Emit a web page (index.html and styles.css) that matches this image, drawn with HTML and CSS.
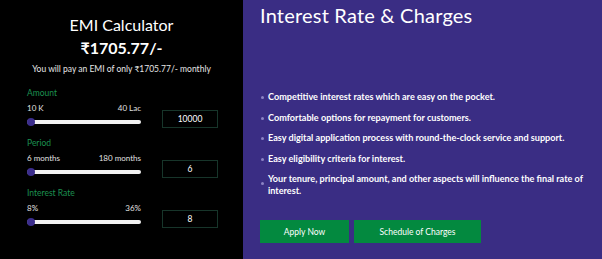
FILE: index.html
```html
<!DOCTYPE html>
<html lang="en">
<head>
    <meta charset="UTF-8">
    <meta name="viewport" content="width=device-width, initial-scale=1.0">
    <title>EMI Calculator</title>
    <link rel="stylesheet" href="styles.css">
</head>
<body>
    <div class="page">
        <section class="calculator">
            <h2 class="calc-title">EMI Calculator</h2>
            <div class="emi-value">₹1705.77/-</div>
            <p class="emi-note">You will pay an EMI of only ₹1705.77/- monthly</p>

            <div class="field">
                <label class="field-label" for="amount">Amount</label>
                <div class="field-row">
                    <div class="slider-block">
                        <div class="range-labels"><span>10 K</span><span>40 Lac</span></div>
                        <input type="range" class="slider" min="10000" max="4000000" value="10000">
                    </div>
                    <input type="text" class="value-box" id="amount" value="10000">
                </div>
            </div>

            <div class="field">
                <label class="field-label" for="period">Period</label>
                <div class="field-row">
                    <div class="slider-block">
                        <div class="range-labels"><span>6 months</span><span>180 months</span></div>
                        <input type="range" class="slider" min="6" max="180" value="6">
                    </div>
                    <input type="text" class="value-box" id="period" value="6">
                </div>
            </div>

            <div class="field">
                <label class="field-label" for="rate">Interest Rate</label>
                <div class="field-row">
                    <div class="slider-block">
                        <div class="range-labels"><span>8%</span><span>36%</span></div>
                        <input type="range" class="slider" min="8" max="36" value="8">
                    </div>
                    <input type="text" class="value-box" id="rate" value="8">
                </div>
            </div>
        </section>

        <section class="charges">
            <h1>Interest Rate &amp; Charges</h1>
            <ul class="charges-list">
                <li>Competitive interest rates which are easy on the pocket.</li>
                <li>Comfortable options for repayment for customers.</li>
                <li>Easy digital application process with round-the-clock service and support.</li>
                <li>Easy eligibility criteria for interest.</li>
                <li>Your tenure, principal amount, and other aspects will influence the final rate of interest.</li>
            </ul>
            <div class="actions">
                <a href="#" class="btn btn-apply">Apply Now</a>
                <a href="#" class="btn btn-schedule">Schedule of Charges</a>
            </div>
        </section>
    </div>
</body>
</html>
```

FILE: styles.css
```css
body {
    margin: 0;
    font-family: 'Lato', 'Noto Sans', sans-serif;
    color: #fff;
    background: #000;
}

.page {
    display: flex;
    height: 259px;
    overflow: hidden;
}

/* left: calculator */
.calculator {
    width: 243px;
    flex-shrink: 0;
    background: #000;
    padding-top: 15px;
    box-sizing: border-box;
}

.calc-title {
    margin: 0;
    text-align: center;
    font-size: 16px;
    line-height: 20px;
    font-weight: 400;
}

.emi-value {
    text-align: center;
    font-size: 16px;
    line-height: 22px;
    font-weight: 700;
    margin-top: 2px;
}

.emi-note {
    margin: 5px 0 0;
    text-align: center;
    font-size: 8.5px;
    line-height: 11px;
    color: #e6e6e6;
}

.field {
    padding-left: 27px;
    margin-top: 12px;
}

.field + .field {
    margin-top: 12px;
}

.field-label {
    display: block;
    font-size: 8.5px;
    line-height: 12px;
    color: #1c9050;
}

.field-row {
    display: flex;
    align-items: flex-end;
    gap: 21px;
    margin-top: 4px;
}

.slider-block {
    width: 114px;
}

.range-labels {
    display: flex;
    justify-content: space-between;
    font-size: 8px;
    line-height: 10px;
    color: #e0e0e0;
}

.slider {
    -webkit-appearance: none;
    appearance: none;
    display: block;
    width: 114px;
    height: 7px;
    margin: 5px 0 0;
    background: transparent;
}

.slider::-webkit-slider-runnable-track {
    height: 4px;
    background: #f2f2f2;
    border-radius: 2px;
}

.slider::-webkit-slider-thumb {
    -webkit-appearance: none;
    width: 8px;
    height: 8px;
    margin-top: -2px;
    border-radius: 50%;
    background: #3b2d8c;
}

.value-box {
    width: 56px;
    height: 18px;
    box-sizing: border-box;
    margin-bottom: -3px;
    border: 1px solid #17352a;
    background: #000;
    color: #fff;
    text-align: center;
    font-family: inherit;
    font-size: 8.5px;
    padding: 0;
}

/* right: charges */
.charges {
    flex: 1;
    background: #3a2d84;
    padding: 0 12px 0 17px;
}

.charges h1 {
    margin: 3px 0 0;
    font-size: 20px;
    line-height: 24px;
    font-weight: 400;
    letter-spacing: 0.2px;
}

.charges-list {
    list-style: none;
    margin: 64px 0 0;
    padding: 0;
}

.charges-list li {
    position: relative;
    padding-left: 8px;
    font-size: 9.1px;
    line-height: 12px;
    font-weight: 700;
    margin-bottom: 8.5px;
}

.charges-list li::before {
    content: "";
    position: absolute;
    left: 1px;
    top: 5px;
    width: 3px;
    height: 3px;
    border-radius: 50%;
    background: #8c83c4;
}

.charges-list li:last-child::before {
    top: 9px;
}

.actions {
    display: flex;
    gap: 5px;
    margin-top: 23px;
}

.btn {
    display: inline-flex;
    align-items: center;
    justify-content: center;
    height: 23px;
    background: #03893f;
    color: #fff;
    text-decoration: none;
    font-size: 8.5px;
}

.btn-apply {
    width: 89px;
}

.btn-schedule {
    width: 127px;
}
```
